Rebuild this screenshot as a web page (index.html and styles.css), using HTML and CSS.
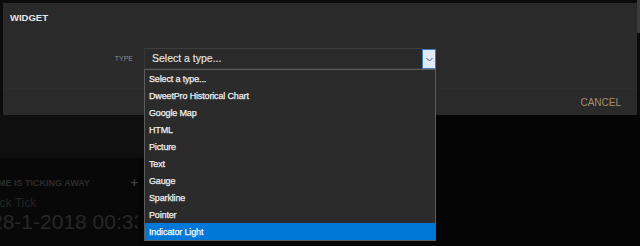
FILE: index.html
```html
<!DOCTYPE html>
<html>

<head>
    <title>Widget</title>
    <link rel="stylesheet" href="styles.css">
</head>

<body>

    <div class="scroll-thumb"></div>

    <div class="modal">
        <div class="modal-header">WIDGET</div>

        <div class="modal-body">
            <div class="form-row">
                <label class="form-label" for="type">TYPE</label>
                <div class="select-wrap">
                    <div class="select-box" id="type">
                        <span class="select-value">Select a type...</span>
                        <span class="select-arrow">
                            <svg width="7" height="5" viewBox="0 0 7 5">
                                <polyline points="0.5,1 3.5,4 6.5,1" fill="none" stroke="#555" stroke-width="1"/>
                            </svg>
                        </span>
                    </div>
                    <ul class="select-list">
                        <li>Select a type...</li>
                        <li>DweetPro Historical Chart</li>
                        <li>Google Map</li>
                        <li>HTML</li>
                        <li>Picture</li>
                        <li>Text</li>
                        <li>Gauge</li>
                        <li>Sparkline</li>
                        <li>Pointer</li>
                        <li class="selected">Indicator Light</li>
                    </ul>
                </div>
            </div>
        </div>

        <div class="modal-footer">
            <span class="cancel-link">CANCEL</span>
        </div>
    </div>

    <div class="page">
        <div class="page-strip"></div>
        <div class="panel">
            <div class="panel-header">
                <span class="panel-title">TIME IS TICKING AWAY</span>
                <span class="panel-add">+</span>
            </div>
            <div class="panel-sub">Tick Tick</div>
            <div class="panel-value">28-1-2018 00:33</div>
        </div>
    </div>

</body>

</html>
```

FILE: styles.css
```css
body {
    font-family: "Liberation Sans", Arial, sans-serif;
    background: #0b0b0b;
    margin: 0;
    width: 640px;
    height: 246px;
    overflow: hidden;
    position: relative;
}

.scroll-thumb {
    position: absolute;
    right: 0;
    top: 0;
    width: 3px;
    height: 33px;
    background: #3c3c3c;
}

.modal {
    margin: 3px 3px 0 3px;
    background: #2a2a2a;
    display: flex;
    flex-direction: column;
    position: relative;
    z-index: 2;
}

.modal-header {
    height: 30px;
    box-sizing: border-box;
    padding: 9px 0 0 7px;
    color: #e6e6e6;
    font-size: 9.5px;
    font-weight: bold;
    line-height: 12px;
}

.modal-body {
    height: 55px;
    box-sizing: border-box;
    padding-top: 15px;
}

.form-row {
    display: flex;
    align-items: center;
    gap: 11px;
}

.form-label {
    width: 130px;
    text-align: right;
    color: #8a8a8a;
    font-size: 7px;
}

.select-wrap {
    position: relative;
}

.select-box {
    display: flex;
    align-items: center;
    width: 292px;
    height: 21px;
    box-sizing: border-box;
}

.select-value {
    flex: 1;
    height: 21px;
    box-sizing: border-box;
    border: 1px solid #363636;
    border-top-color: #3e3e3e;
    border-right: none;
    padding-left: 7px;
    color: #e4e4e4;
    font-size: 10.5px;
    line-height: 19px;
    -webkit-text-stroke: 0.15px #e4e4e4;
}

.select-arrow {
    width: 14px;
    height: 20px;
    box-sizing: border-box;
    margin-top: 1px;
    background: #dfecf8;
    border: 1px solid #3f7cb8;
    display: flex;
    align-items: center;
    justify-content: center;
}

.select-list {
    position: absolute;
    top: 21px;
    left: 0;
    width: 292px;
    box-sizing: border-box;
    margin: 0;
    padding: 0;
    list-style: none;
    background: #2b2b2b;
    border: 1px solid #5c5c5c;
    z-index: 5;
}

.select-list li {
    height: 17px;
    padding-left: 4px;
    color: #f0f0f0;
    font-size: 9px;
    letter-spacing: -0.15px;
    line-height: 18px;
    -webkit-text-stroke: 0.25px #f0f0f0;
}

.select-list li.selected {
    background: #0078d7;
    color: #ffffff;
}

.modal-footer {
    height: 27px;
    box-sizing: border-box;
    border-top: 1px solid #2e2e2e;
    display: flex;
    justify-content: flex-end;
    align-items: center;
    padding-right: 16px;
}

.cancel-link {
    color: #a88d68;
    font-size: 10px;
    padding-top: 1px;
}

.page {
    background: #050505;
}

.page-strip {
    width: 144px;
    height: 43px;
    background: #0f0f0f;
}

.panel {
    margin-left: -10px;
    width: 148px;
    height: 88px;
    box-sizing: border-box;
    padding-top: 19px;
    background: #080808;
    overflow: hidden;
}

.panel-header {
    display: flex;
    justify-content: space-between;
    align-items: center;
    line-height: 12px;
}

.panel-title {
    color: #2c2c2c;
    font-size: 9px;
    font-weight: bold;
}

.panel-add {
    color: #3e3e3e;
    font-size: 13px;
    font-weight: bold;
}

.panel-sub {
    margin-top: 7px;
    color: #262626;
    font-size: 12px;
    line-height: 14px;
}

.panel-value {
    margin-left: 1px;
    color: #272727;
    font-size: 21px;
    line-height: 24px;
    white-space: nowrap;
}
```
